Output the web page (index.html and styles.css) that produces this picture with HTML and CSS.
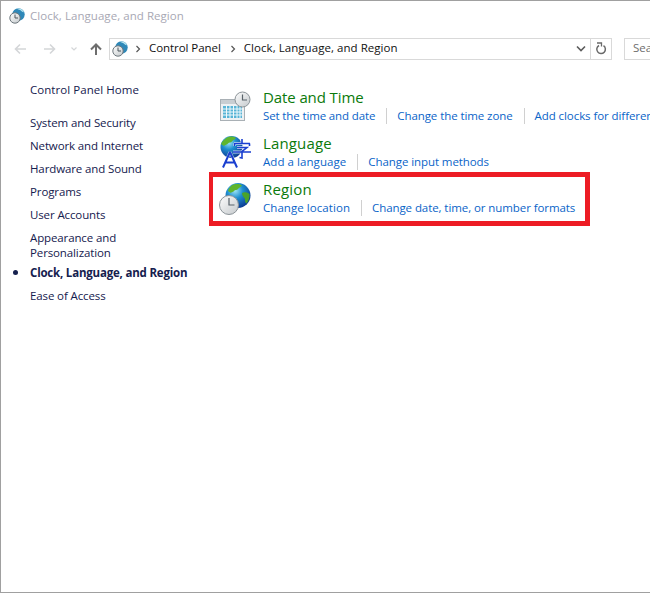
FILE: index.html
```html
<!DOCTYPE html>
<html lang="en">
<head>
<meta charset="utf-8">
<title>Clock, Language, and Region</title>
<link rel="stylesheet" href="styles.css">
</head>
<body>
<svg class="defs" width="0" height="0" aria-hidden="true">
  <defs>
    <radialGradient id="globe" cx="0.38" cy="0.3" r="0.78">
      <stop offset="0" stop-color="#9fe6f7"/>
      <stop offset="0.4" stop-color="#1f8fd0"/>
      <stop offset="1" stop-color="#0a2f8a"/>
    </radialGradient>
    <linearGradient id="face" x1="0" y1="0" x2="1" y2="1">
      <stop offset="0" stop-color="#fdfdfd"/>
      <stop offset="1" stop-color="#c4c9cc"/>
    </linearGradient>
    <symbol id="small-clock" viewBox="0 0 16 16">
      <circle cx="9.500" cy="6.500" r="6.200" fill="#2e88b8"/>
      <path d="M8 .8c3-.8 6 1 7 3.500-2 0-3-2-4-2.200S9 1.500 8 .8z" fill="#b8e6f0"/>
      <circle cx="6" cy="10" r="5.200" fill="url(#face)" stroke="#6d777d" stroke-width="1"/>
      <path d="M6 6.500V10h3" fill="none" stroke="#4c565c" stroke-width="1"/>
    </symbol>
  </defs>
</svg>
<div class="window">
  <header class="titlebar">
    <svg class="icon16"><use href="#small-clock"/></svg>
    <span class="title-text">Clock, Language, and Region</span>
  </header>
  <nav class="toolbar">
    <svg class="nav-btn" viewBox="0 0 12 12"><path d="M12 6H1.500M6 1.500 1.500 6 6 10.500" fill="none" stroke="#d4d6d8" stroke-width="1.600"/></svg>
    <svg class="nav-btn" viewBox="0 0 12 12"><path d="M0 6h10.500M6 1.500 10.500 6 6 10.500" fill="none" stroke="#d4d6d8" stroke-width="1.600"/></svg>
    <svg class="nav-drop" viewBox="0 0 8 8"><path d="M1.500 2.500 4 5l2.500-2.500" fill="none" stroke="#d4d6d8" stroke-width="1.200"/></svg>
    <svg class="nav-up" viewBox="0 0 12 12"><path d="M6 12V1.500M1 6.500 6 1.500l5 5" fill="none" stroke="#6e6e6e" stroke-width="2"/></svg>
    <div class="address">
      <svg class="icon16"><use href="#small-clock"/></svg>
      <svg class="crumb-sep first" viewBox="0 0 6 8"><path d="M1.500 1 4.500 4l-3 3" fill="none" stroke="#555" stroke-width="1.200"/></svg>
      <span class="crumb">Control Panel</span>
      <svg class="crumb-sep" viewBox="0 0 6 8"><path d="M1.500 1 4.500 4l-3 3" fill="none" stroke="#555" stroke-width="1.200"/></svg>
      <span class="crumb wide">Clock, Language, and Region</span>
      <svg class="addr-drop" viewBox="0 0 10 8"><path d="M1 1.500 5 5.500l4-4" fill="none" stroke="#5c5c5c" stroke-width="1.600"/></svg>
      <div class="refresh">
        <svg viewBox="0 0 12 14" class="refresh-icon"><path d="M4 3.500a4.300 4.300 0 1 0 4.500.2" fill="none" stroke="#6a6a6a" stroke-width="1.500"/><path d="M2 1h4.500v3.500" fill="none" stroke="#6a6a6a" stroke-width="1.300"/></svg>
      </div>
    </div>
    <div class="search">Search Control Panel</div>
  </nav>
  <div class="content">
    <aside class="sidebar">
      <a class="side-home">Control Panel Home</a>
      <ul class="side-list">
        <li>System and Security</li>
        <li>Network and Internet</li>
        <li>Hardware and Sound</li>
        <li>Programs</li>
        <li>User Accounts</li>
        <li>Appearance and<br>Personalization</li>
        <li class="current">Clock, Language, and Region</li>
        <li>Ease of Access</li>
      </ul>
    </aside>
    <main class="main">
      <section class="item">
        <svg class="item-icon" viewBox="0 0 32 32">
          <rect x="1.500" y="8.500" width="24" height="21" fill="#eef1f3" stroke="#a9b0b5"/>
          <rect x="2" y="9" width="23" height="4" fill="#c9ced2"/>
          <path d="M4 15h19v12H4z" fill="#58b4d6"/>
          <path d="M4 18h19M4 21h19M4 24h19M7.500 15v12M11 15v12M14.500 15v12M18 15v12M21 15v12" stroke="#eef8fb" stroke-width="1"/>
          <circle cx="23.500" cy="8.500" r="7.500" fill="url(#face)" stroke="#8c9499"/>
          <path d="M23.500 3.500v5.500h4.500" fill="none" stroke="#59636a" stroke-width="1.200"/>
        </svg>
        <div class="item-text">
          <h2>Date and Time</h2>
          <div class="links"><a class="tight">Set the time and date</a><a>Change the time zone</a><a>Add clocks for different time zones</a></div>
        </div>
      </section>
      <section class="item">
        <svg class="item-icon" viewBox="0 0 32 32">
          <circle cx="12.500" cy="10" r="11" fill="url(#globe)"/>
          <path d="M8 0.500c3-1.500 7-1 9 .5-1 2-3 1.500-4 3.500-1 1.500-3 .5-4 2s-3 1-4 2.500L2 7C3 4 6 2 8 .5z" fill="#5fb52e"/>
          <path class="halo" d="M11 15 4 30.500M11 15l7 15.500M6.500 25.500h9"/>
          <path class="halo" d="M15 6.500h16M15.500 6.500V9M30.500 6.500V9M23 2v4.500M18 10.500h10l-5 4v6.500l-2.500-.5M14 15h18"/>
          <path class="glyph thick" d="M11 15 4 30.500M11 15l7 15.500M6.500 25.500h9"/>
          <path class="glyph" d="M15 6.500h16M15.500 6.500V9M30.500 6.500V9M23 2v4.500M18 10.500h10l-5 4v6.500l-2.500-.5M14 15h18"/>
        </svg>
        <div class="item-text">
          <h2 class="roomy">Language</h2>
          <div class="links"><a class="loose">Add a language</a><a>Change input methods</a></div>
        </div>
      </section>
      <section class="item">
        <svg class="item-icon" viewBox="0 0 32 32">
          <circle cx="19" cy="12.500" r="12.500" fill="url(#globe)"/>
          <path d="M12 3c3-2.500 8-2.500 11-.5-1 2-3 1.500-4 3.500-1 1.500-3 .5-4 2s-2.500 .5-3 2L9 8c.5-2 1.500-3.500 3-5z" fill="#5fb52e"/>
          <path d="M23 10c2-1 5-1 7.500 1 .5 3-1 7-3 9.500-2-1-1-3.500-2-5.500-1-1-2.500-2.500-2.500-5z" fill="#4aa32a"/>
          <circle cx="10" cy="22" r="9.500" fill="url(#face)" stroke="#8c9499" stroke-width="1"/>
          <path d="M10 15v7h5.500" fill="none" stroke="#59636a" stroke-width="1.200"/>
        </svg>
        <div class="item-text">
          <h2 class="roomy">Region</h2>
          <div class="links"><a class="loose">Change location</a><a>Change date, time, or number formats</a></div>
        </div>
      </section>
      <div class="highlight"></div>
    </main>
  </div>
</div>
</body>
</html>
```
FILE: styles.css
```css
html, body {
  margin: 0;
  padding: 0;
  height: 100%;
  overflow: hidden;
  background: #fff;
}
body {
  font-family: "Open Sans", "Noto Sans", sans-serif;
  font-size: 12px;
}
.defs { position: absolute; }
.window {
  box-sizing: border-box;
  width: 670px;
  height: 593px;
  border: 1px solid #a0a0a0;
  border-right: 0;
  display: flex;
  flex-direction: column;
  overflow: hidden;
}
.icon16 { width: 16px; height: 16px; flex: none; }
.titlebar {
  height: 29px;
  display: flex;
  align-items: center;
  padding-left: 8px;
  gap: 5px;
  flex: none;
}
.title-text {
  color: #a8a8b4;
  font-size: 11.5px;
  letter-spacing: 0.05px;
  line-height: 28px;
}
.toolbar {
  height: 38px;
  display: flex;
  align-items: center;
  flex: none;
  padding-left: 13px;
}
.nav-btn { width: 12px; height: 12px; margin-right: 18px; flex: none; }
.nav-drop { width: 8px; height: 8px; margin-left: -4px; margin-right: 12px; flex: none; }
.nav-up { width: 12px; height: 12px; margin-right: 7px; flex: none; }
.address {
  box-sizing: border-box;
  width: 503px;
  height: 22px;
  border: 1px solid #d9d9d9;
  display: flex;
  align-items: center;
  padding-left: 2px;
  flex: none;
}
.crumb { color: #111; font-size: 11.5px; letter-spacing: -0.06px; white-space: nowrap; line-height: 18px; margin-top: -2px; }
.crumb.wide { letter-spacing: 0.05px; }
.crumb-sep { width: 6px; height: 8px; margin: 0 8px 0 9px; flex: none; }
.crumb-sep.first { margin: 0 8px 0 7px; }
.addr-drop { width: 10px; height: 8px; margin-left: auto; margin-right: 4px; flex: none; }
.refresh {
  width: 20px;
  height: 20px;
  border-left: 1px solid #d9d9d9;
  display: flex;
  align-items: center;
  justify-content: center;
  flex: none;
}
.refresh-icon { width: 12px; height: 14px; }
.search {
  box-sizing: border-box;
  width: 150px;
  height: 22px;
  margin-left: 12px;
  border: 1px solid #d9d9d9;
  color: #6d6d6d;
  font-size: 11.5px;
  line-height: 18px;
  padding-left: 8px;
  flex: none;
  white-space: nowrap;
}
.content {
  display: flex;
  flex: 1;
  min-height: 0;
}
.sidebar {
  box-sizing: border-box;
  width: 180px;
  flex: none;
  padding: 14px 0 0 29px;
  color: #15204e;
  font-size: 11.5px;
  letter-spacing: -0.12px;
  line-height: 15px;
}
.side-home { display: block; margin-bottom: 18px; letter-spacing: 0.05px; }
.side-list {
  list-style: none;
  margin: 0;
  padding: 0;
  display: flex;
  flex-direction: column;
  gap: 8px;
}
.side-list li { white-space: nowrap; }
.current {
  font-weight: 700;
  position: relative;
  letter-spacing: -0.2px;
  margin-top: -3px;
}
.current::before {
  content: "";
  position: absolute;
  left: -17px;
  top: 5px;
  width: 5px;
  height: 5px;
  border-radius: 50%;
  background: #15204e;
}
.main {
  position: relative;
  flex: 1;
  padding: 20px 0 0 38px;
  display: flex;
  flex-direction: column;
  gap: 8px;
}
.item {
  display: flex;
  gap: 12px;
  height: 38px;
  align-items: flex-start;
}
.item-icon { width: 32px; height: 32px; flex: none; margin-top: 3px; overflow: visible; }
.item-text { white-space: nowrap; }
.item h2 {
  margin: -1px 0 1px;
  color: #0b7a0b;
  font-size: 15px;
  font-weight: 400;
  line-height: 20px;
  letter-spacing: -0.1px;
}
.item h2.roomy { letter-spacing: 0.15px; }
.halo { fill: none; stroke: #fff; stroke-width: 3; opacity: 0.75; }
.glyph { fill: none; stroke: #1a3fd0; stroke-width: 1.600; }
.glyph.thick { stroke-width: 2; }
.links {
  display: flex;
  line-height: 16px;
  color: #0a64c8;
  font-size: 11.5px;
  letter-spacing: -0.08px;
}
.links a { padding-right: 11px; margin-right: 10px; border-right: 1px solid #d0d0d0; }
.links a.tight { letter-spacing: -0.13px; }
.links a.loose { letter-spacing: 0.06px; }
.links a:last-child { border-right: 0; }
.highlight {
  box-sizing: border-box;
  position: absolute;
  left: 28px;
  top: 104px;
  width: 381px;
  height: 54px;
  border: 5px solid #ed1c24;
  border-left-width: 4px;
}
```
